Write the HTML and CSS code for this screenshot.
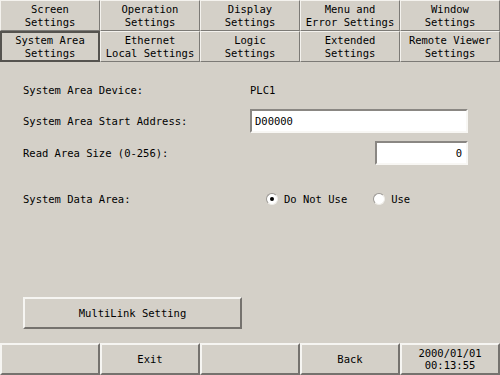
FILE: index.html
```html
<!DOCTYPE html>
<html lang="en">
<head>
  <meta charset="UTF-8" />
  <title>System Area Settings</title>
  <link rel="stylesheet" href="styles.css">
</head>
<body>
  <div class="screen">
    <div class="tabs">
      <div class="tab">Screen<br>Settings</div>
      <div class="tab">Operation<br>Settings</div>
      <div class="tab">Display<br>Settings</div>
      <div class="tab">Menu and<br>Error Settings</div>
      <div class="tab">Window<br>Settings</div>
      <div class="tab active">System Area<br>Settings</div>
      <div class="tab">Ethernet<br>Local Settings</div>
      <div class="tab">Logic<br>Settings</div>
      <div class="tab">Extended<br>Settings</div>
      <div class="tab">Remote Viewer<br>Settings</div>
    </div>

    <div class="content">
      <div class="form">
        <div class="row">
          <span class="label">System Area Device:</span>
          <span class="value">PLC1</span>
        </div>
        <div class="row r2">
          <span class="label">System Area Start Address:</span>
          <div class="field">D00000</div>
        </div>
        <div class="row r3">
          <span class="label">Read Area Size (0-256):</span>
          <div class="field small">0</div>
        </div>
        <div class="row r4">
          <span class="label">System Data Area:</span>
          <div class="radios">
            <span class="radio checked"></span><span class="opt">Do Not Use</span>
            <span class="radio"></span><span class="opt">Use</span>
          </div>
        </div>
      </div>

      <div class="btn multilink">MultiLink Setting</div>
    </div>

    <div class="footer">
      <div class="btn"></div>
      <div class="btn">Exit</div>
      <div class="btn"></div>
      <div class="btn">Back</div>
      <div class="btn clock">2000/01/01<br>00:13:55</div>
    </div>
  </div>
</body>
</html>
```

FILE: styles.css
```css
body {
  margin: 0;
  background: #d4d0c8;
  font-family: "DejaVu Sans Mono", "Liberation Mono", monospace;
  font-size: 10.5px;
  color: #000;
}
.screen {
  width: 500px;
  height: 375px;
  display: flex;
  flex-direction: column;
  background: #d4d0c8;
}
.tabs {
  display: grid;
  grid-template-columns: repeat(5, 100px);
  grid-auto-rows: 31px;
}
.tab {
  box-sizing: border-box;
  display: flex;
  align-items: center;
  justify-content: center;
  text-align: center;
  line-height: 13px;
  border: 1px solid;
  border-color: #f4f2ee #7c7a76 #7c7a76 #f4f2ee;
}
.tab.active {
  border: 2px solid #55534f;
}
.content {
  flex: 1;
  padding: 16px 32px 0 23px;
}
.row {
  display: grid;
  grid-template-columns: 227px 218px;
  align-items: center;
  height: 24px;
}
.r2 { margin-top: 7px; }
.r3 { margin-top: 8px; }
.r4 { margin-top: 22px; }
.field {
  box-sizing: border-box;
  height: 24px;
  background: #fff;
  border: 2px solid;
  border-color: #8a8783 #f8f7f4 #f8f7f4 #8a8783;
  padding: 0 3px;
  display: flex;
  align-items: center;
}
.field.small {
  width: 93px;
  justify-self: end;
  justify-content: flex-end;
  padding-right: 4px;
}
.radios {
  display: flex;
  align-items: center;
  padding-left: 16px;
}
.radio {
  box-sizing: border-box;
  width: 12px;
  height: 12px;
  border-radius: 50%;
  background: #fff;
  border: 1px solid;
  border-color: #9a9793 #eeece8 #eeece8 #9a9793;
  display: flex;
  align-items: center;
  justify-content: center;
}
.radio.checked::after {
  content: "";
  width: 4px;
  height: 4px;
  border-radius: 50%;
  background: #000;
}
.opt {
  margin-left: 6px;
  margin-right: 26px;
}
.btn {
  box-sizing: border-box;
  display: flex;
  align-items: center;
  justify-content: center;
  text-align: center;
  border: 2px solid;
  border-color: #f6f5f2 #75726e #75726e #f6f5f2;
}
.multilink {
  width: 219px;
  height: 32px;
  margin-top: 86px;
}
.footer {
  display: grid;
  grid-template-columns: repeat(5, 100px);
  height: 32px;
}
.clock {
  line-height: 12px;
}
```
